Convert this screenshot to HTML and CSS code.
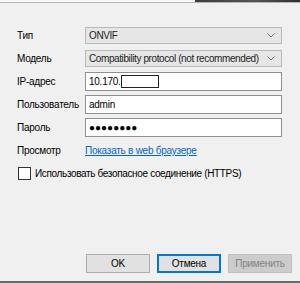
FILE: index.html
```html
<!DOCTYPE html>
<html lang="ru">
<head>
    <meta charset="UTF-8">
    <title>Камера</title>
    <link rel="stylesheet" href="styles.css">
</head>
<body>
    <div class="topbar"></div>
    <div class="dialog">
        <div class="form">
            <label class="label">Тип</label>
            <div class="combo">
                <span class="combo-text">ONVIF</span>
                <svg class="chevron" width="8" height="5" viewBox="0 0 8 5"><path d="M0.5 0.5 L4 4 L7.5 0.5" fill="none" stroke="#707070" stroke-width="1"/></svg>
            </div>

            <label class="label">Модель</label>
            <div class="combo">
                <span class="combo-text">Compatibility protocol (not recommended)</span>
                <svg class="chevron" width="8" height="5" viewBox="0 0 8 5"><path d="M0.5 0.5 L4 4 L7.5 0.5" fill="none" stroke="#707070" stroke-width="1"/></svg>
            </div>

            <label class="label">IP-адрес</label>
            <div class="field">
                <span>10.170.</span><span class="hidden-part"></span>
            </div>

            <label class="label">Пользователь</label>
            <div class="field"><span>admin</span></div>

            <label class="label">Пароль</label>
            <div class="field"><span class="dots">●●●●●●●●</span></div>

            <label class="label">Просмотр</label>
            <div class="link-row"><a href="#">Показать в web браузере</a></div>
        </div>

        <div class="check-row">
            <span class="checkbox"></span>
            <span>Использовать безопасное соединение (HTTPS)</span>
        </div>

        <div class="buttons">
            <button class="btn">OK</button>
            <button class="btn btn-default">Отмена</button>
            <button class="btn" disabled>Применить</button>
        </div>
    </div>
    <div class="bottombar"></div>
</body>
</html>
```

FILE: styles.css
```css
html, body {
    margin: 0;
    padding: 0;
}

body {
    width: 300px;
    height: 283px;
    background-color: #f0f0f0;
    color: #000000;
    font-family: "Liberation Sans", Arial, sans-serif;
    font-size: 10px;
    letter-spacing: -0.25px;
    display: flex;
    flex-direction: column;
    overflow: hidden;
}

.topbar {
    height: 2px;
    background: linear-gradient(to right, #f8f8f8 65%, #3c3c3c 65%, #555 85%, #2e2e2e 100%);
    border-bottom: 1px solid #b4b4b4;
}

.dialog {
    flex: 1;
    display: flex;
    flex-direction: column;
    padding: 23px 8px 8px 17px;
}

.form {
    display: grid;
    grid-template-columns: 68px 197px;
    grid-auto-rows: 19px;
    row-gap: 4px;
    align-items: center;
}

.label {
    line-height: 19px;
    white-space: nowrap;
}

.combo {
    height: 17px;
    box-sizing: border-box;
    border: 1px solid #b9b9b9;
    background-color: #e6e6e6;
    color: #222;
    display: flex;
    align-items: center;
    justify-content: space-between;
    gap: 6px;
    padding: 0 6px 0 3px;
    white-space: nowrap;
}

.combo-text {
    min-width: 0;
    overflow: hidden;
    letter-spacing: -0.4px;
}

.chevron {
    flex-shrink: 0;
}

.field {
    height: 19px;
    box-sizing: border-box;
    border: 1px solid #8f8f8f;
    background-color: #ffffff;
    display: flex;
    align-items: center;
    padding: 0 3px;
    white-space: nowrap;
}

.hidden-part {
    display: inline-block;
    width: 38px;
    height: 13px;
    border: 1px solid #222;
    background-color: #fff;
    box-sizing: border-box;
}

.dots {
    font-size: 10px;
    letter-spacing: 0;
}

.link-row a {
    color: #0066cc;
    text-decoration: underline;
}

.check-row {
    display: flex;
    align-items: center;
    gap: 4px;
    margin-top: 6px;
    height: 14px;
    letter-spacing: -0.35px;
}

.checkbox {
    width: 13px;
    height: 13px;
    box-sizing: border-box;
    border: 1px solid #333;
    background-color: #fff;
    margin-left: 1px;
}

.buttons {
    margin-top: auto;
    display: flex;
    justify-content: flex-end;
    gap: 7px;
}

.btn {
    width: 64px;
    height: 19px;
    box-sizing: border-box;
    border: 1px solid #adadad;
    background-color: #e1e1e1;
    font-family: "Liberation Sans", Arial, sans-serif;
    font-size: 10px;
    letter-spacing: -0.25px;
    color: #000;
    padding: 0;
}

.btn-default {
    border: 2px solid #0078d7;
}

.btn:disabled {
    background-color: #cccccc;
    border-color: #bfbfbf;
    color: #838383;
}

.bottombar {
    height: 2px;
    background-color: #6a6a6a;
}
```
